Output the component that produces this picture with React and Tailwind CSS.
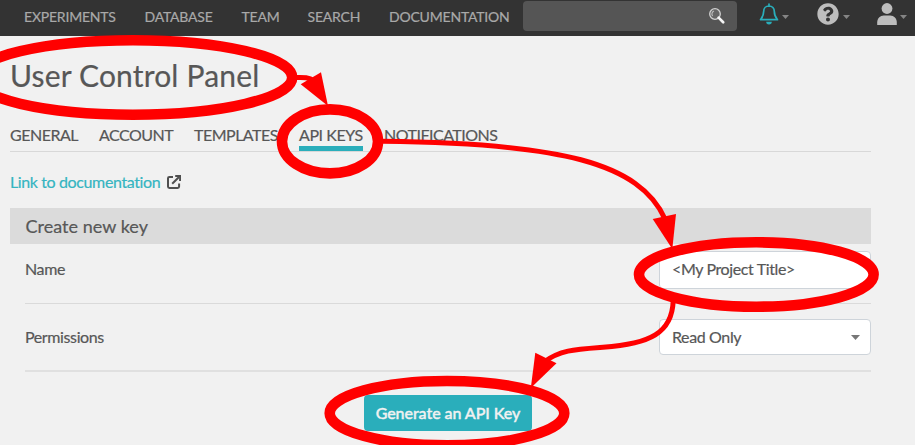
import React from "react";
import { FaQuestionCircle } from "react-icons/fa";

const NAV = [
  ["EXPERIMENTS", "w-[120.5px]"],
  ["DATABASE", "w-[97px]"],
  ["TEAM", "w-[66px]"],
  ["SEARCH", "w-[81.5px]"],
  ["DOCUMENTATION", "w-[133.5px]"],
];

const TABS = [
  ["GENERAL", "w-[89px]"],
  ["ACCOUNT", "w-[95px]"],
  ["TEMPLATES", "w-[105px]"],
  ["API KEYS", "w-[85px]"],
  ["NOTIFICATIONS", "w-[114px]"],
];

function Caret({ className = "h-[4px] w-[7px]" }) {
  return (
    <svg className={"shrink-0 " + className} viewBox="0 0 8 4" preserveAspectRatio="none" fill="currentColor">
      <path d="M0 0h8L4 4z" />
    </svg>
  );
}

function SearchIcon() {
  return (
    <svg className="h-[18px] w-[18px]" viewBox="0 0 18 18" fill="none">
      <circle cx="7" cy="7" r="5.3" fill="#666" stroke="#d0d0d0" strokeWidth="1.3" />
      <path d="M4.6 9A3.2 3.2 0 0 1 6 4" stroke="#bbb" strokeWidth="1.200" />
      <path d="M10.600 10.600l4.600 4.600" stroke="#f4f4f4" strokeWidth="2.700" strokeLinecap="round" />
    </svg>
  );
}

function BellIcon() {
  return (
    <svg className="h-[22px] w-[20px]" viewBox="0 0 20 22" fill="none">
      <path d="M10 1v2.200M10 3c-3.300 0-5.300 2.300-5.300 5.300 0 4.300-1.200 6.200-3.200 8.400h17c-2-2.200-3.200-4.100-3.200-8.400C15.300 5.300 13.300 3 10 3z" stroke="#2aaebb" strokeWidth="1.700" strokeLinejoin="round" strokeLinecap="round" />
      <path d="M7.200 18.800h5.600a2.800 2.600 0 0 1-5.600 0z" fill="#2aaebb" />
    </svg>
  );
}

function UserIcon() {
  return (
    <svg className="h-[22px] w-[20px]" viewBox="0 0 20 22" fill="#bdbdbd">
      <circle cx="10" cy="5.500" r="5.400" />
      <path d="M.2 22v-2.500c0-4 2.800-7 6.600-7h6.400c3.800 0 6.600 3 6.600 7V22z" />
    </svg>
  );
}

function ExternalIcon() {
  return (
    <svg className="h-[14px] w-[14px]" viewBox="0 0 14 14" fill="none" stroke="#4f4f4f" strokeWidth="2">
      <path d="M6 1.900H2.400Q1 1.900 1 3.300V11.600Q1 13 2.400 13H10.700Q12.100 13 12.100 11.600V8.500" />
      <path d="M5.200 8.800L12 2" />
      <path d="M8.200 1h4.900v4.900" />
    </svg>
  );
}

/* Red markup that highlights the steps for creating a key. */
function Annotations() {
  return (
    <svg className="pointer-events-none absolute inset-0 h-[445px] w-[915px]" viewBox="0 0 915 445" fill="none">
      <g stroke="#f00" strokeWidth="10.600">
        <ellipse cx="133" cy="77.500" rx="159.200" ry="37.200" />
        <ellipse cx="330" cy="141.400" rx="48" ry="32" />
        <ellipse cx="756.300" cy="274.500" rx="117.300" ry="32.200" />
        <ellipse cx="447" cy="413.200" rx="117.300" ry="32.200" />
      </g>
      <g stroke="#f00" strokeWidth="5">
        <path d="M296 77.500C304 77.200 309 77.300 314 81" />
        <path d="M382 141.300C560 143 640 163 665 219" />
        <path d="M673.200 301C672 333 650 344 603 347.200C575 349.300 560 350 544 362" />
      </g>
      <g fill="#f00">
        <path d="M300.700 84.300L321 72.200L328 106z" />
        <path d="M652.700 219L676 214L672.300 249z" />
        <path d="M535.300 352.700L556.500 363.300L530.800 388z" />
      </g>
    </svg>
  );
}

export default function App() {
  return (
    <div className="relative h-[445px] w-[915px] overflow-hidden bg-[#f1f1f1] font-['Lato',sans-serif] text-[#575757] [-webkit-text-stroke:0.2px_currentColor]">
      <header className="flex h-9 bg-[#333] pl-[24px] text-[#a9a9a9]">
        <nav className="flex h-[32px] items-center text-[14px] tracking-[-0.2px]">
          {NAV.map(([label, width]) => (
            <a key={label} className={"whitespace-nowrap " + width}>{label}</a>
          ))}
        </nav>
        <div className="mt-px flex h-[30px] w-[214px] items-center justify-end rounded bg-[#555] pr-[11px]">
          <SearchIcon />
        </div>
        <div className="flex h-[28px] items-center pl-[22px] text-[#858585]">
          <div className="flex w-[58.5px] items-center">
            <BellIcon />
            <Caret className="ml-[3px] mt-[5px] h-[4px] w-[7px]" />
          </div>
          <div className="flex w-[60px] items-center">
            <FaQuestionCircle className="size-[22px] text-[#bdbdbd]" />
            <Caret className="ml-[3.5px] mt-[5px] h-[4px] w-[7px]" />
          </div>
          <div className="flex items-center">
            <UserIcon />
            <Caret className="ml-[3px] mt-[5px] h-[4px] w-[7px]" />
          </div>
        </div>
      </header>

      <main className="ml-[10px] w-[861px]">
        <h1 className="pt-[20px] text-[30px] leading-[38px] tracking-[0.17px]">User Control Panel</h1>
        <div className="mt-[28px] flex h-[30px] border-b border-[#d8d8d8] text-[16px] leading-[25px] tracking-[-0.5px]">
          {TABS.map(([label, width]) => (
            <div key={label} className={width}>
              <span
                className={
                  label === "API KEYS"
                    ? "block h-[29px] w-16 whitespace-nowrap border-b-[5px] border-[#2aaebb] tracking-[-0.42px]"
                    : "block whitespace-nowrap"
                }
              >
                {label}
              </span>
            </div>
          ))}
        </div>
        <div className="mt-5 flex h-5 items-center text-[16px] tracking-[-0.38px]">
          <a className="w-[156.500px] whitespace-nowrap text-[#35b5c1]">Link to documentation</a>
          <ExternalIcon />
        </div>
        <h2 className="mt-4 flex h-9 items-center bg-[#dbdbdb] pl-[15.5px] text-[18px] tracking-[0.03px]">Create new key</h2>

        <form className="pl-[15px] text-[16px] tracking-[-0.38px]">
          <div className="flex h-[60px] justify-between border-b border-[#dadada] pt-[7px]">
            <label className="leading-[35px]">Name</label>
            <div className="h-[38px] w-[212px] rounded border border-[#ced4da] bg-white pl-3 leading-[34px]">
              &lt;My Project Title&gt;
            </div>
          </div>
          <div className="flex h-[68px] justify-between border-b-2 border-[#e0e0e0] pt-[15px]">
            <label className="leading-[35px]">Permissions</label>
            <div className="flex h-9 w-[212px] items-center justify-between rounded border border-[#ced4da] bg-white pl-3 pr-[10px]">
              <span>Read Only</span>
              <Caret className="h-[5px] w-[9px] text-[#777]" />
            </div>
          </div>
        </form>
        <div className="flex pl-[354px] pt-[23px]">
          <button type="button" className="h-9 w-[168px] whitespace-nowrap rounded bg-[#2aaebb] text-[16px] font-medium tracking-[-0.05px] text-[#f1f1f1] [-webkit-text-stroke:0.4px_currentColor]">
            Generate an API Key
          </button>
        </div>
      </main>
      <Annotations />
    </div>
  );
}
